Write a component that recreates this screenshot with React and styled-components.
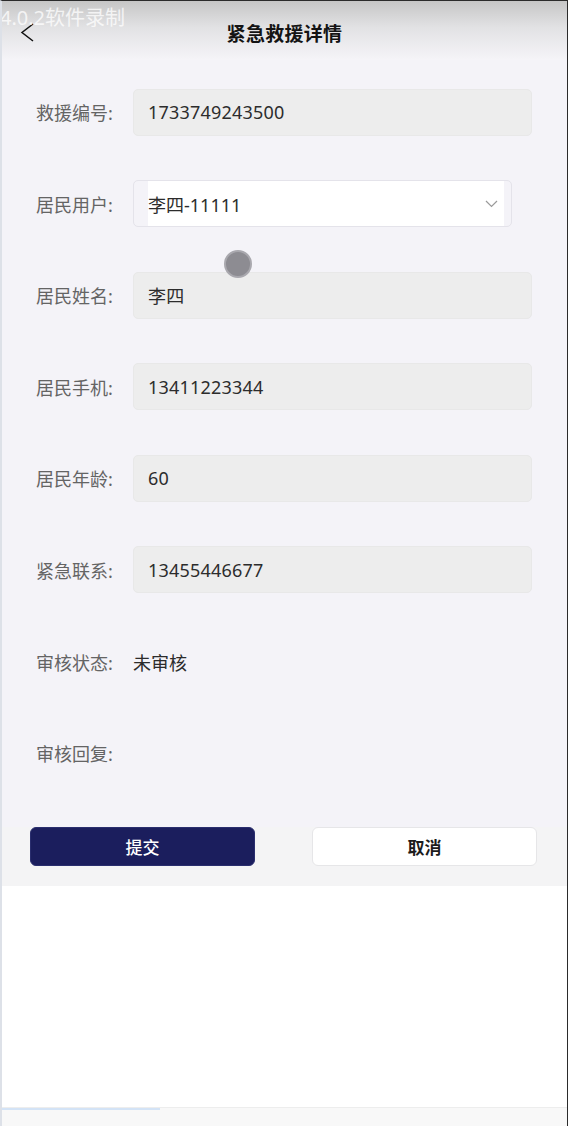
import styled, { createGlobalStyle } from 'styled-components';

const GlobalStyle = createGlobalStyle`
  html, body {
    margin: 0;
    padding: 0;
    background: #ffffff;
  }
  * {
    box-sizing: border-box;
  }
  body {
    font-family: "Noto Sans", "Noto Sans CJK SC", sans-serif;
  }
`;

const Frame = styled.div`
  position: relative;
  width: 568px;
  height: 1126px;
  display: flex;
  flex-direction: column;
  overflow: hidden;
  background: #ffffff;
  border-top: 1px solid #2b2b2b;
  border-right: 1px solid #2b2b2b;
  border-left: 2px solid #dde1e8;
`;

const Watermark = styled.div`
  position: absolute;
  top: 4px;
  left: -2px;
  font-size: 20px;
  line-height: 26px;
  color: rgba(255, 255, 255, 0.75);
  pointer-events: none;
`;

const Header = styled.header`
  height: 59px;
  flex-shrink: 0;
  display: flex;
  align-items: center;
  justify-content: center;
  position: relative;
  background: linear-gradient(#c6c6c6 0%, #e2e2e4 45%, #f5f4f8 100%);
`;

const BackButton = styled.div`
  position: absolute;
  left: 17px;
  top: 20px;
  width: 16px;
  height: 22px;
  display: flex;
`;

const Title = styled.h1`
  margin: 0;
  font-size: 19px;
  font-weight: 700;
  color: #141414;
  line-height: 26px;
  margin-top: 7px;
  letter-spacing: 0.3px;
`;

const Form = styled.div`
  background: #f4f3f8;
  padding: 29px 35px 51px 34px;
  display: flex;
  flex-direction: column;
  gap: 45.6px;
`;

const Row = styled.div`
  display: flex;
  align-items: center;
  height: 46px;
`;

const Label = styled.div`
  width: 97px;
  flex-shrink: 0;
  font-size: 18px;
  color: #646464;
`;

const ValueBox = styled.div`
  flex: 1;
  height: 47px;
  display: flex;
  align-items: center;
  padding-left: 14px;
  background: #ededed;
  border: 1px solid #e8e8e8;
  border-radius: 5px;
  font-size: 18px;
  letter-spacing: 0.2px;
  color: #2c2c2c;
`;

const Select = styled.div`
  width: 379px;
  height: 47px;
  display: flex;
  padding: 0 7px 0 14px;
  background: #f4f3f8;
  border: 1px solid #e4e3ea;
  border-radius: 5px;
`;

const SelectInner = styled.div`
  flex: 1;
  display: flex;
  align-items: center;
  justify-content: space-between;
  padding-right: 6px;
  background: #ffffff;
  font-size: 18px;
  color: #2c2c2c;
`;

const PlainValue = styled.div`
  font-size: 18px;
  color: #2c2c2c;
`;

const Touch = styled.div`
  position: absolute;
  left: 222px;
  top: 249px;
  width: 28px;
  height: 28px;
  border-radius: 50%;
  background: #8d8c92;
  border: 2px solid #a9a8ae;
  pointer-events: none;
`;

const ButtonBar = styled.div`
  background: #f4f4f5;
  padding: 0 30px 20px 28px;
  display: flex;
  justify-content: space-between;
`;

const Button = styled.div`
  width: 225px;
  height: 39px;
  display: flex;
  align-items: center;
  justify-content: center;
  border-radius: 6px;
  font-size: 17px;
  background: ${(p) => (p.$primary ? '#1b1e5d' : '#ffffff')};
  color: ${(p) => (p.$primary ? '#ffffff' : '#1c1c1c')};
  font-weight: ${(p) => (p.$primary ? 500 : 700)};
  border: 1px solid ${(p) => (p.$primary ? '#2a2e6e' : '#e6e6e8')};
`;

const Blank = styled.div`
  flex: 1;
  background: #ffffff;
`;

const BottomBar = styled.div`
  height: 19px;
  flex-shrink: 0;
  background: #f8f8f8;
  border-top: 1px solid #ededed;
`;

const Progress = styled.div`
  width: 158px;
  height: 2px;
  background: #d3e3f6;
`;

const fields = [
  { label: '救援编号:', value: '1733749243500' },
  { label: '居民用户:', value: '李四-11111', select: true },
  { label: '居民姓名:', value: '李四' },
  { label: '居民手机:', value: '13411223344' },
  { label: '居民年龄:', value: '60' },
  { label: '紧急联系:', value: '13455446677' },
];

const App = () => {
  return (
    <Frame>
      <GlobalStyle />
      <Header>
        <BackButton>
          <svg width="16" height="22" viewBox="0 0 16 22">
            <polyline
              points="14,3 3,11.5 14,20"
              fill="none"
              stroke="#111"
              strokeWidth="1.5"
            />
          </svg>
        </BackButton>
        <Title>紧急救援详情</Title>
      </Header>
      <Form>
        {fields.map((f) => (
          <Row key={f.label}>
            <Label>{f.label}</Label>
            {f.select ? (
              <Select>
                <SelectInner>
                  {f.value}
                  <svg width="13" height="8" viewBox="0 0 13 8">
                    <polyline
                      points="1,1 6.5,6.5 12,1"
                      fill="none"
                      stroke="#9a9a9a"
                      strokeWidth="1.2"
                    />
                  </svg>
                </SelectInner>
              </Select>
            ) : (
              <ValueBox>{f.value}</ValueBox>
            )}
          </Row>
        ))}
        <Row>
          <Label>审核状态:</Label>
          <PlainValue>未审核</PlainValue>
        </Row>
        <Row>
          <Label>审核回复:</Label>
        </Row>
      </Form>
      <ButtonBar>
        <Button $primary>提交</Button>
        <Button>取消</Button>
      </ButtonBar>
      <Blank />
      <BottomBar>
        <Progress />
      </BottomBar>
      <Touch />
      <Watermark>4.0.2软件录制</Watermark>
    </Frame>
  );
};

export default App;
